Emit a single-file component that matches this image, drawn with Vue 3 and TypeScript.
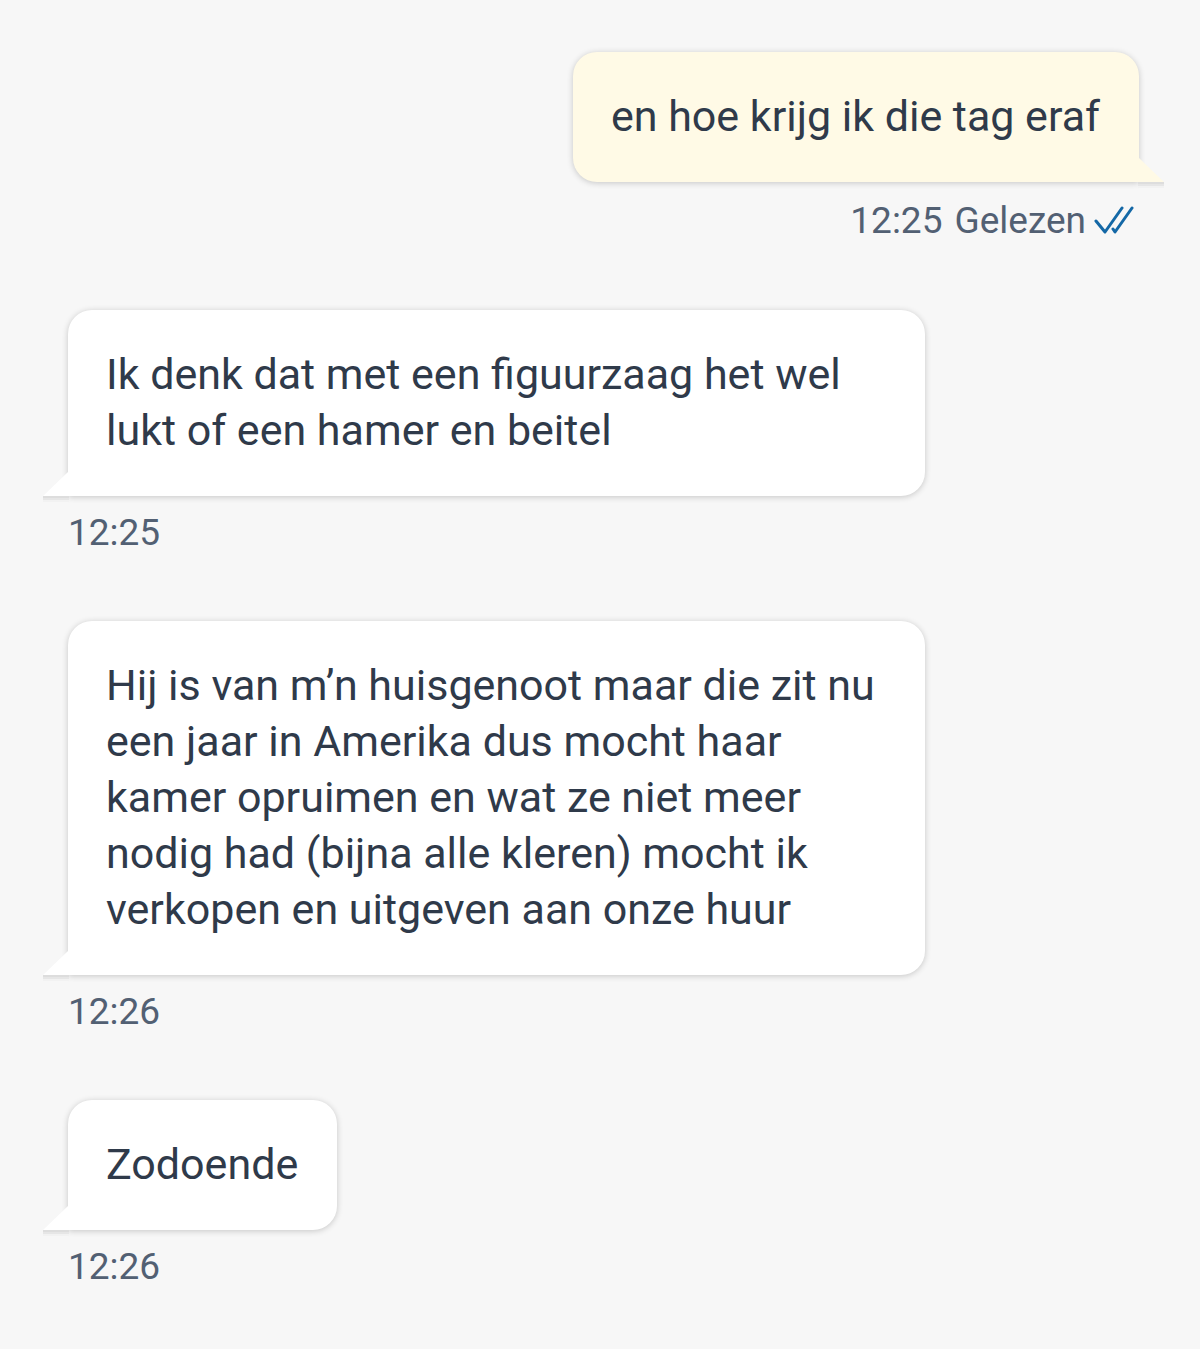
<script setup lang="ts">
interface Message {
  id: number
  text: string
  time: string
  own: boolean
  read?: string
}

const messages: Message[] = [
  { id: 1, text: 'en hoe krijg ik die tag eraf', time: '12:25', own: true, read: 'Gelezen' },
  { id: 2, text: 'Ik denk dat met een figuurzaag het wel lukt of een hamer en beitel', time: '12:25', own: false },
  {
    id: 3,
    text: 'Hij is van m’n huisgenoot maar die zit nu een jaar in Amerika dus mocht haar kamer opruimen en wat ze niet meer nodig had (bijna alle kleren) mocht ik verkopen en uitgeven aan onze huur',
    time: '12:26',
    own: false,
  },
  { id: 4, text: 'Zodoende', time: '12:26', own: false },
]
</script>

<template>
  <main class="chat">
    <article v-for="m in messages" :key="m.id" class="message" :class="{ own: m.own }">
      <div class="bubble">
        <p class="text">{{ m.text }}</p>
        <svg class="tail" viewBox="0 0 26 32" aria-hidden="true">
          <path fill="#dddddd" d="M0 26H26V28H0Z" />
          <path fill="#e6e6e6" d="M0 28H26V30H0Z" />
          <path fill="#f2f2f2" d="M0 30H26V32H0Z" />
          <path class="tail-fill" d="M26 1L25 2L0 26H26Z" />
        </svg>
      </div>
      <footer class="meta">
        <time>{{ m.time }}</time>
        <span v-if="m.read" class="receipt">
          {{ m.read }}
          <svg class="ticks" viewBox="0 0 40 30" aria-hidden="true">
            <path d="M2 15L11 26L28 2M19 23L21 26L38 2" />
          </svg>
        </span>
      </footer>
    </article>
  </main>
</template>

<style>
body {
  margin: 0;
  background: #f7f7f7;
}
</style>

<style scoped>
.chat {
  display: flex;
  flex-direction: column;
  gap: 63px;
  padding: 52px 61px 57px 68px;
  font-family: Roboto, "Liberation Sans", sans-serif;
  color: #2f3a4a;
}
.message {
  display: flex;
  flex-direction: column;
  align-items: flex-start;
}
.message.own {
  align-items: flex-end;
}
.bubble {
  position: relative;
  box-sizing: border-box;
  max-width: 80%;
  padding: 36px 39px 38px 38px;
  border-radius: 24px 24px 24px 0;
  background: #fff;
  box-shadow: 0 1px 6px rgba(0, 0, 0, 0.2);
}
.own .bubble {
  border-radius: 24px 24px 0 24px;
  background: #fffae6;
}
.text {
  margin: 0;
  font-size: 43px;
  line-height: 56px;
}
.tail {
  position: absolute;
  left: -25px;
  bottom: -6px;
  width: 26px;
  height: 32px;
}
.own .tail {
  left: auto;
  right: -25px;
  transform: scaleX(-1);
}
.tail-fill {
  fill: #fff;
}
.own .tail-fill {
  fill: #fffae6;
}
.meta {
  display: flex;
  align-items: center;
  gap: 12px;
  padding-top: 12px;
  font-size: 37px;
  line-height: 50px;
  color: #526073;
}
.own .meta {
  padding: 14px 5px 1px 0;
}
.receipt {
  display: flex;
  align-items: center;
  gap: 8px;
}
.ticks {
  width: 40px;
  height: 30px;
  fill: none;
  stroke: #1468a6;
  stroke-width: 3;
  stroke-linecap: round;
  stroke-linejoin: round;
}
</style>
